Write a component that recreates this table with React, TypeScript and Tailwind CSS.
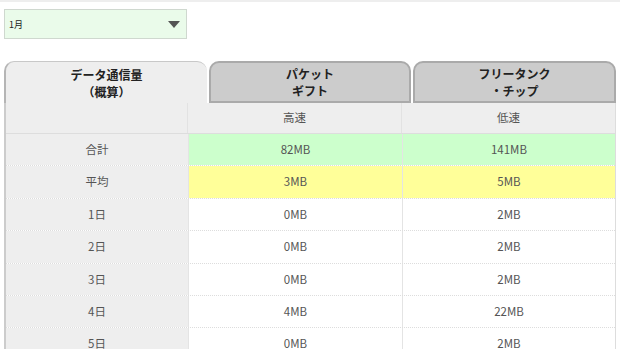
import React from "react";

const rows: { label: string; hi: string; lo: string; bg?: string }[] = [
  { label: "合計", hi: "82MB", lo: "141MB", bg: "bg-[#ccffcc]" },
  { label: "平均", hi: "3MB", lo: "5MB", bg: "bg-[#ffff99]" },
  { label: "1日", hi: "0MB", lo: "2MB" },
  { label: "2日", hi: "0MB", lo: "2MB" },
  { label: "3日", hi: "0MB", lo: "2MB" },
  { label: "4日", hi: "4MB", lo: "22MB" },
  { label: "5日", hi: "0MB", lo: "2MB" },
];

export default function App() {
  return (
    <div
      className="w-[620px] h-[349px] overflow-hidden bg-white border-t-2 border-[#eeeeee]"
      style={{ fontFamily: '"Noto Sans CJK JP", "Noto Sans", sans-serif' }}
    >
      <div className="pl-[4px] pt-[7px]">
        <div className="w-[183px] h-[30px] border border-[#cfd8cf] bg-[#eafbea] flex items-center justify-between pl-[4px] pr-[6px]">
          <span className="text-[9px] text-[#222] leading-none">1月</span>
          <svg width="12" height="7" viewBox="0 0 12 7">
            <polygon points="0,0 12,0 6,7" fill="#555" />
          </svg>
        </div>
      </div>
      <div className="pl-[4px] pr-[4px] pt-[22px]">
        <div className="flex gap-[2px] h-[42px]">
          <div className="w-[203px] h-full rounded-t-[10px] bg-[#eeeeee] border-l-2 border-t border-[#b5b5b5] border-t-[#c8c8c8] flex flex-col items-center justify-center text-[12px] font-bold text-[#222] leading-[17px]">
            <span>データ通信量</span>
            <span>（概算）</span>
          </div>
          <div className="w-[202px] h-full rounded-t-[10px] bg-[#cccccc] border-2 border-[#aaaaaa] flex flex-col items-center justify-center text-[12px] font-bold text-[#222] leading-[17px]">
            <span>パケット</span>
            <span>ギフト</span>
          </div>
          <div className="w-[203px] h-full rounded-t-[10px] bg-[#cccccc] border-2 border-[#aaaaaa] flex flex-col items-center justify-center text-[12px] font-bold text-[#222] leading-[17px]">
            <span>フリータンク</span>
            <span>・チップ</span>
          </div>
        </div>
        <div className="w-[612px] border-l-2 border-r border-l-[#cccccc] border-r-[#dddddd] text-[11.5px] text-[#555]">
          <div className="grid grid-cols-[182px_214px_1fr] h-[31px] bg-[#eeeeee] border-b border-[#dddddd]">
            <div className="border-r border-[#e2e2e2]" />
            <div className="flex items-center justify-center border-r border-[#e2e2e2]">高速</div>
            <div className="flex items-center justify-center">低速</div>
          </div>
          {rows.map((r) => (
            <div
              key={r.label}
              className="grid grid-cols-[182px_214px_1fr] h-[32.4px] border-b border-dotted border-[#dddddd]"
            >
              <div className="flex items-center justify-center bg-[#eeeeee]">{r.label}</div>
              <div className={`flex items-center justify-center border-l border-[#e4e4e4] ${r.bg ?? "bg-white"}`}>{r.hi}</div>
              <div className={`flex items-center justify-center border-l border-[#e4e4e4] ${r.bg ?? "bg-white"}`}>{r.lo}</div>
            </div>
          ))}
        </div>
      </div>
    </div>
  );
}
